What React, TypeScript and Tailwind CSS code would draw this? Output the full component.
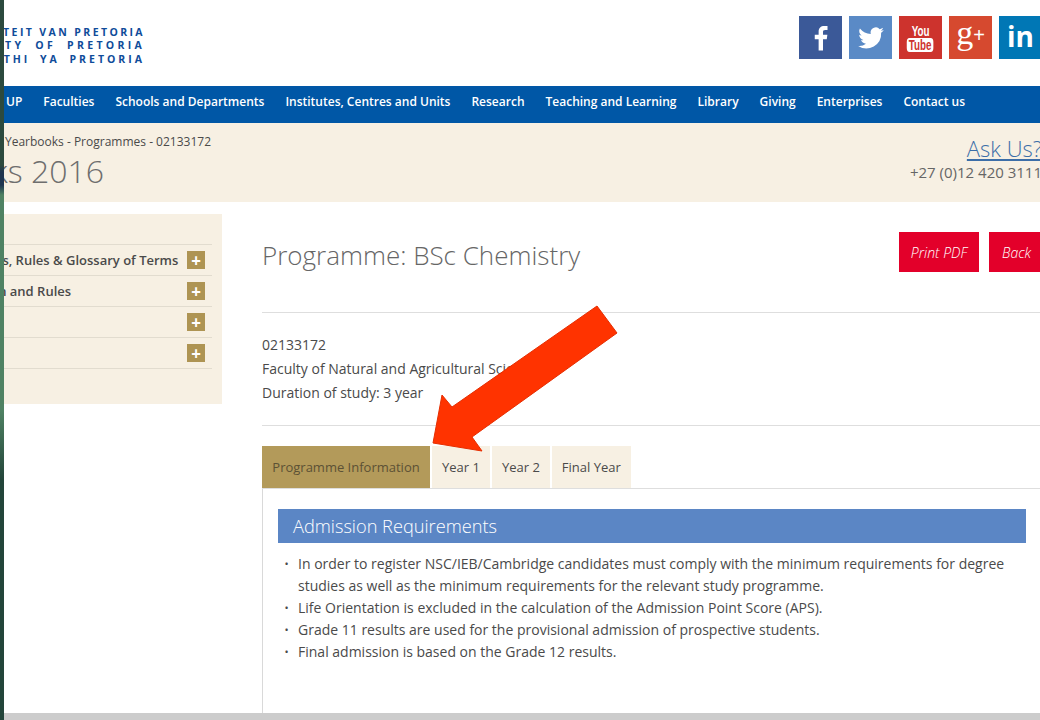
const navItems = [
  "UP",
  "Faculties",
  "Schools and Departments",
  "Institutes, Centres and Units",
  "Research",
  "Teaching and Learning",
  "Library",
  "Giving",
  "Enterprises",
  "Contact us",
];

const sideItems = ["Regulations, Rules & Glossary of Terms", "Graduation and Rules", "", ""];

const tabs = ["Year 1", "Year 2", "Final Year"];

const bullets = [
  <>
    In order to register NSC/IEB/Cambridge candidates must comply with the minimum requirements for degree
    <br />
    studies as well as the minimum requirements for the relevant study programme.
  </>,
  "Life Orientation is excluded in the calculation of the Admission Point Score (APS).",
  "Grade 11 results are used for the provisional admission of prospective students.",
  "Final admission is based on the Grade 12 results.",
];

function Social() {
  return (
    <div className="flex gap-[7px] w-[241px] shrink-0">
      {/* Facebook */}
      <div className="w-[43px] h-[43px] bg-[#3b5998] flex items-center justify-center shrink-0">
        <svg viewBox="0 0 24 24" className="w-[30px] h-[30px]" fill="#fff">
          <path d="M13.6 22v-9h3l.5-3.6h-3.500V7.300c0-1 .3-1.700 1.800-1.700h1.800V2.400c-.3 0-1.400-.1-2.600-.1-2.700 0-4.500 1.600-4.500 4.600v2.500H7v3.600h3.100v9h3.500z" />
        </svg>
      </div>
      {/* Twitter */}
      <div className="w-[43px] h-[43px] bg-[#5a8ac6] flex items-center justify-center shrink-0">
        <svg viewBox="0 0 24 24" className="w-[28px] h-[28px]" fill="#fff">
          <path d="M23 5.100c-.8.400-1.700.600-2.600.7.900-.6 1.600-1.400 2-2.500-.9.500-1.800.9-2.900 1.100A4.500 4.500 0 0 0 11.800 8.500 12.800 12.800 0 0 1 2.500 3.800a4.500 4.500 0 0 0 1.400 6 4.500 4.500 0 0 1-2-.6c0 2.200 1.500 4 3.600 4.500-.7.200-1.400.2-2 .1.600 1.800 2.200 3.100 4.200 3.100A9 9 0 0 1 1 18.800 12.700 12.700 0 0 0 20.700 7.500c.9-.6 1.700-1.400 2.300-2.400z" />
        </svg>
      </div>
      {/* YouTube */}
      <div className="w-[43px] h-[43px] bg-[#cd332d] flex flex-col items-center justify-center shrink-0 font-['Liberation_Sans',sans-serif] font-bold text-[14px] leading-[14px]">
        <span className="text-white scale-x-[.7]">You</span>
        <span className="bg-white text-[#cd332d] rounded-[4px] px-[3px] scale-x-[.7]">Tube</span>
      </div>
      {/* Google plus */}
      <div className="w-[43px] h-[43px] bg-[#d6492f] flex items-center justify-center shrink-0 text-white font-['Liberation_Serif',serif] text-[34px] leading-none">
        <span className="mt-[-9px]">g</span>
        <span className="font-['Liberation_Sans',sans-serif] text-[20px] mt-[-6px]">+</span>
      </div>
      {/* LinkedIn */}
      <div className="w-[43px] h-[43px] bg-[#0077b5] flex items-center justify-center shrink-0 text-white font-['Open_Sans',sans-serif] font-bold text-[28px] leading-none">
        <span className="mt-[-4px]">in</span>
      </div>
    </div>
  );
}

export default function App() {
  return (
    <div className="relative w-[1040px] h-[720px] overflow-hidden bg-white font-['Open_Sans',sans-serif] text-[#4a4a4a]">
      <div className="w-[1100px] ml-[-60px] flex flex-col h-[713px] overflow-hidden">
        {/* Header */}
        <header className="h-[86px] shrink-0 flex justify-between items-start">
          <div className="w-[205px] pt-[26px] text-right text-[#0f4c9a] font-bold text-[10.5px] leading-[13.300px] whitespace-nowrap overflow-hidden flex flex-col items-end">
            <div className="tracking-[2.400px]">UNIVERSITEIT VAN PRETORIA</div>
            <div className="tracking-[3.300px] [word-spacing:5px]">UNIVERSITY OF PRETORIA</div>
            <div className="tracking-[3px] [word-spacing:4px]">YUNIBESITHI YA PRETORIA</div>
          </div>
          <div className="pt-[16px]">
            <Social />
          </div>
        </header>

        {/* Main nav */}
        <nav className="h-[37px] shrink-0 bg-[#0057a6] flex items-center gap-[21px] pl-[66px] pb-[5px] text-white text-[12px] font-semibold whitespace-nowrap">
          {navItems.map((item) => (
            <span key={item}>{item}</span>
          ))}
        </nav>

        {/* Band */}
        <div className="h-[79px] shrink-0 bg-[#f7f0e3] flex justify-between">
          <div className="pt-[10px] whitespace-nowrap">
            <div className="w-[271px] flex justify-end text-[12px] leading-[18px] font-medium text-[#4a4a4a]">
              Yearbooks - Programmes - 02133172
            </div>
            <div className="w-[164px] flex justify-end mt-[-2px] text-[32px] font-light leading-[44px] text-[#6e6e6e]">
              Yearbooks 2016
            </div>
          </div>
          <div className="w-[190px] pt-[10px] text-right mr-[-2px] whitespace-nowrap">
            <div className="text-[22px] font-light leading-[30px] text-[#3c6ea8] underline">Ask Us?</div>
            <div className="text-[15px] leading-[18px] text-[#666]">+27 (0)12 420 3111</div>
          </div>
        </div>

        {/* Body */}
        <div className="flex flex-1 min-h-0 pt-[12px]">
          <aside className="w-[282px] h-[190px] shrink-0 bg-[#f7f0e3] pl-[60px] pr-[10px] pt-[30px]">
            <div className="border-t border-[#e2dccf]">
              {sideItems.map((item, i) => (
                <div
                  key={i}
                  className="h-[31px] border-b border-[#e2dccf] flex items-center justify-between pr-[7px] text-[13px] font-semibold text-[#4a4a4a] whitespace-nowrap"
                >
                  <span className="ml-[-65px] pt-[1px]">{item}</span>
                  <span className="w-[18px] h-[18px] bg-[#ae9453] flex items-center justify-center text-white text-[17px] font-bold leading-none shrink-0">
                    +
                  </span>
                </div>
              ))}
            </div>
          </aside>

          <main className="ml-[40px] flex-1 min-w-0 flex flex-col">
            <div className="flex justify-between items-start pt-[18px] h-[99px] border-b border-[#dedede] shrink-0">
              <h1 className="text-[26px] font-light leading-[48px] text-[#666] mt-[-1px]">Programme: BSc Chemistry</h1>
              <div className="flex gap-[10px] mr-[-4px]">
                <button className="w-[80px] h-[40px] bg-[#e3002a] text-white text-[14px] italic font-light">Print PDF</button>
                <button className="w-[55px] h-[40px] bg-[#e3002a] text-white text-[14px] italic font-light">Back</button>
              </div>
            </div>

            <div className="h-[113px] shrink-0 border-b border-[#dedede] pt-[20px] text-[14px] leading-[24px]">
              <div>02133172</div>
              <div>Faculty of Natural and Agricultural Sciences</div>
              <div>Duration of study: 3 year</div>
            </div>

            <div className="flex gap-[2px] mt-[20px] h-[43px] shrink-0 border-b border-[#dedede] text-[13px]">
              <div className="w-[168px] h-[42px] pt-[1px] bg-[#b39a5a] flex items-center justify-center text-[#5c5135]">Programme Information</div>
              {tabs.map((tab) => (
                <div key={tab} className="h-[42px] px-[10px] pt-[1px] bg-[#f7f0e3] flex items-center text-[#4a4a4a]">
                  {tab}
                </div>
              ))}
            </div>

            <div className="flex-1 border-l border-[#d9d9d9] pl-[15px] pt-[20px]">
              <div className="w-[748px] h-[34px] bg-[#5b86c5] text-white text-[18.200px] font-light flex items-center pl-[15px] pt-[1px]">
                Admission Requirements
              </div>
              <ul className="mt-[10px] pl-[20px] text-[14px] leading-[22px]">
                {bullets.map((b, i) => (
                  <li key={i} className="flex whitespace-nowrap">
                    <span className="w-[7px] mr-[8px] ml-[-15px] shrink-0 text-center text-[11px]">•</span>
                    <span>{b}</span>
                  </li>
                ))}
              </ul>
            </div>
          </main>
        </div>
      </div>

      <div className="h-[7px] bg-[#cccccc]" />

      {/* Window edge on the left */}
      <div className="absolute left-0 top-0 w-[4px] h-[720px] bg-[linear-gradient(to_bottom,#2c4a3e_0,#2c4a3e_165px,#1f3550_172px,#1f3550_185px,#4f8263_195px,#4f8263_410px,#23453a_480px,#23453a_720px)]" />

      {/* Annotation arrow */}
      <svg className="absolute left-0 top-0 pointer-events-none" width="1040" height="720">
        <polygon
          points="597,306 617,333 472,437 482,451 433,443 442,395 452,407"
          fill="#ff3300"
          stroke="#e62e00"
          strokeWidth="1"
        />
      </svg>
    </div>
  );
}
